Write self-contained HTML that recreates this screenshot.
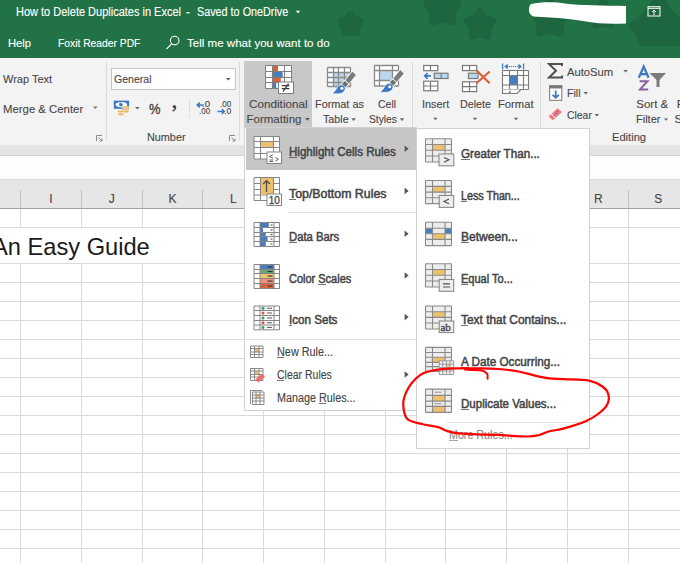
<!DOCTYPE html><html><head><meta charset="utf-8"><style>
*{margin:0;padding:0;box-sizing:border-box}
html,body{width:680px;height:563px;overflow:hidden;background:#fff;font-family:"Liberation Sans",sans-serif}
.a{position:absolute;white-space:nowrap;transform-origin:0 0;-webkit-text-stroke:0.12px currentColor}
svg{position:absolute;left:0;top:0}
</style></head><body><div class="a" style="left:0;top:0;width:680px;height:58px;background:#217346"></div>
<div class="a" style="left:0;top:58px;width:680px;height:87px;background:#f3f3f3"></div>
<div class="a" style="left:0;top:145px;width:680px;height:11px;background:#e4e4e4"></div>
<div class="a" style="left:0;top:155px;width:680px;height:1px;background:#d6d6d6"></div>
<div class="a" style="left:0;top:156px;width:680px;height:23px;background:#fdfdfd"></div>
<div class="a" style="left:0;top:178.5px;width:680px;height:1.5px;background:#d9d9d9"></div>
<div class="a" style="left:0;top:180px;width:680px;height:28px;background:#e6e6e6"></div>
<div class="a" style="left:0;top:207.5px;width:680px;height:1.5px;background:#a3a3a3"></div>
<svg width="680" height="563"><g stroke="#d9d9d9" stroke-width="1"><line x1="20.5" y1="209" x2="20.5" y2="563"/><line x1="20.5" y1="190" x2="20.5" y2="207.5" stroke="#c2c2c2"/><line x1="81.5" y1="209" x2="81.5" y2="563"/><line x1="81.5" y1="190" x2="81.5" y2="207.5" stroke="#c2c2c2"/><line x1="142.5" y1="209" x2="142.5" y2="563"/><line x1="142.5" y1="190" x2="142.5" y2="207.5" stroke="#c2c2c2"/><line x1="202.5" y1="209" x2="202.5" y2="563"/><line x1="202.5" y1="190" x2="202.5" y2="207.5" stroke="#c2c2c2"/><line x1="263.5" y1="209" x2="263.5" y2="563"/><line x1="263.5" y1="190" x2="263.5" y2="207.5" stroke="#c2c2c2"/><line x1="324.5" y1="209" x2="324.5" y2="563"/><line x1="324.5" y1="190" x2="324.5" y2="207.5" stroke="#c2c2c2"/><line x1="385.5" y1="209" x2="385.5" y2="563"/><line x1="385.5" y1="190" x2="385.5" y2="207.5" stroke="#c2c2c2"/><line x1="445.5" y1="209" x2="445.5" y2="563"/><line x1="445.5" y1="190" x2="445.5" y2="207.5" stroke="#c2c2c2"/><line x1="506.5" y1="209" x2="506.5" y2="563"/><line x1="506.5" y1="190" x2="506.5" y2="207.5" stroke="#c2c2c2"/><line x1="567.5" y1="209" x2="567.5" y2="563"/><line x1="567.5" y1="190" x2="567.5" y2="207.5" stroke="#c2c2c2"/><line x1="628.5" y1="209" x2="628.5" y2="563"/><line x1="628.5" y1="190" x2="628.5" y2="207.5" stroke="#c2c2c2"/><line x1="688.5" y1="209" x2="688.5" y2="563"/><line x1="688.5" y1="190" x2="688.5" y2="207.5" stroke="#c2c2c2"/><line x1="0" y1="227.5" x2="680" y2="227.5"/><line x1="0" y1="263.5" x2="680" y2="263.5"/><line x1="0" y1="282.5" x2="680" y2="282.5"/><line x1="0" y1="301.5" x2="680" y2="301.5"/><line x1="0" y1="320.5" x2="680" y2="320.5"/><line x1="0" y1="339.5" x2="680" y2="339.5"/><line x1="0" y1="358.5" x2="680" y2="358.5"/><line x1="0" y1="377.5" x2="680" y2="377.5"/><line x1="0" y1="396.5" x2="680" y2="396.5"/><line x1="0" y1="415.5" x2="680" y2="415.5"/><line x1="0" y1="434.5" x2="680" y2="434.5"/><line x1="0" y1="453.5" x2="680" y2="453.5"/><line x1="0" y1="472.5" x2="680" y2="472.5"/><line x1="0" y1="491.5" x2="680" y2="491.5"/><line x1="0" y1="510.5" x2="680" y2="510.5"/><line x1="0" y1="529.5" x2="680" y2="529.5"/><line x1="0" y1="548.5" x2="680" y2="548.5"/></g><polygon points="350.5,15.0 354.0,19.6 359.5,21.6 356.2,26.4 356.1,32.2 350.5,30.5 344.9,32.2 344.8,26.4 341.5,21.6 347.0,19.6" fill="#1e6640" stroke="#1e6640" stroke-width="8" stroke-linejoin="round"/><polygon points="442.5,-7.5 448.1,0.8 457.7,3.6 451.5,11.4 451.9,21.4 442.5,18.0 433.1,21.4 433.5,11.4 427.3,3.6 436.9,0.8" fill="#1e6640" stroke="#1e6640" stroke-width="8" stroke-linejoin="round"/><polygon points="480.0,12.0 484.7,18.5 492.4,21.0 487.6,27.5 487.6,35.5 480.0,33.0 472.4,35.5 472.4,27.5 467.6,21.0 475.3,18.5" fill="#1e6640" stroke="#1e6640" stroke-width="8" stroke-linejoin="round"/><polygon points="550.0,2.5 556.2,10.5 565.7,13.9 560.0,22.2 559.7,32.3 550.0,29.5 540.3,32.3 540.0,22.2 534.3,13.9 543.8,10.5" fill="#1e6640" stroke="#1e6640" stroke-width="8" stroke-linejoin="round"/><polygon points="603.0,3.0 607.4,8.9 614.4,11.3 610.1,17.3 610.1,24.7 603.0,22.5 595.9,24.7 595.9,17.3 591.6,11.3 598.6,8.9" fill="#1e6640" stroke="#1e6640" stroke-width="8" stroke-linejoin="round"/><path d="M653 0H666C670 8 674 14 680 16V46H639C638 40 637 37 634 33C626 29 627 22 638 18Z" fill="#1e6640"/><path d="M531 4C542 1.5 556 2 565 3.5C580 5.5 605 5.5 626 6V23.5C612 24 598 24 583 21C567 18 550 17.5 533 16.5C528 14 528 7 531 4Z" fill="#fff"/><path d="M106.5 62V141" stroke="#dadada" stroke-width="1"/><path d="M239.5 62V141" stroke="#dadada" stroke-width="1"/><path d="M412.5 62V141" stroke="#dadada" stroke-width="1"/><path d="M540.5 62V141" stroke="#dadada" stroke-width="1"/><path d="M96.5 141.0V135.5H102.0M98.5 137.5L102.0 141.0M102.0 138.5V141.0H99.5" stroke="#8a8a8a" stroke-width="1" fill="none"/><path d="M229.5 141.0V135.5H235.0M231.5 137.5L235.0 141.0M235.0 138.5V141.0H232.5" stroke="#8a8a8a" stroke-width="1" fill="none"/><rect x="111.5" y="68.5" width="124" height="21" fill="#fff" stroke="#c6c6c6"/><path d="M226.0 77.9H230.60000000000002L228.3 80.5Z" fill="#5a5a5a"/><path d="M93.0 106.5H97.6L95.3 109.1Z" fill="#777"/><rect x="113.8" y="100.6" width="15.3" height="8.2" fill="#3f78c2"/><ellipse cx="121.4" cy="104.7" rx="5.8" ry="2.7" fill="#fff"/><circle cx="121" cy="104.6" r="2" fill="#3f78c2"/><path d="M122.6 104.5a1.6 1.6 0 0 0 -1.6 -1.6" stroke="#fff" stroke-width="0.6" fill="none"/><ellipse cx="125.8" cy="107.4" rx="3.3" ry="1.3" fill="#e7b763" stroke="#f3f3f3" stroke-width="0.5"/><ellipse cx="125.8" cy="109.6" rx="3.3" ry="1.3" fill="#e7b763" stroke="#f3f3f3" stroke-width="0.5"/><ellipse cx="125.8" cy="111.6" rx="3.3" ry="1.3" fill="#e7b763" stroke="#f3f3f3" stroke-width="0.5"/><ellipse cx="120.7" cy="111.6" rx="3.3" ry="1.3" fill="#e7b763" stroke="#f3f3f3" stroke-width="0.5"/><ellipse cx="120.7" cy="114.2" rx="3.3" ry="1.3" fill="#e7b763" stroke="#f3f3f3" stroke-width="0.5"/><path d="M135.0 107.0H139.60000000000002L137.3 109.6Z" fill="#666"/><path d="M189.5 99V118.5" stroke="#c8c8c8" stroke-width="1" stroke-dasharray="1 1"/><path d="M203.5 105H197.5M199.8 102.6L197.3 105L199.8 107.4" stroke="#3f78c2" stroke-width="1.6" fill="none"/><path d="M224 111.5H217.5M221.8 109.1L224.3 111.5L221.8 113.9" stroke="#3f78c2" stroke-width="1.6" fill="none"/><rect x="244" y="61" width="68" height="66" fill="#c8c8c8"/><rect x="265.5" y="65.5" width="26.0" height="23.0" fill="#fff"/><rect x="272.5" y="66" width="5.5" height="5.5" fill="#d9603b"/><rect x="272.5" y="71.5" width="10.199999999999989" height="6.0" fill="#4a7ebb"/><rect x="272.5" y="77.5" width="8.300000000000011" height="5.0" fill="#d9603b"/><rect x="272.5" y="82.5" width="3.6999999999999886" height="6.0" fill="#4a7ebb"/><path d="M265.5 65.5V88.5M272.5 65.5V88.5M284.5 65.5V88.5M291.5 65.5V88.5M265.5 65.5H291.5M265.5 71.5H291.5M265.5 77.5H291.5M265.5 82.5H291.5M265.5 88.5H291.5" stroke="#7f7f7f" stroke-width="1" fill="none"/><rect x="278.5" y="82" width="15.0" height="11.5" fill="#fff" stroke="#7f7f7f" stroke-width="1"/><path d="M281.8 85.6H289.4M281.8 88.6H289.4M288.6 83.6L283 91.6" stroke="#3c3c3c" stroke-width="1.2" fill="none"/><path d="M305.0 117.95H309.79999999999995L307.4 120.85000000000001Z" fill="#555"/><rect x="327.5" y="67.5" width="23.0" height="19.0" fill="#fff"/><rect x="333.5" y="72.5" width="17.0" height="14.0" fill="#bcd6ee"/><path d="M327.5 67.5V86.5M333.5 67.5V86.5M338.5 67.5V86.5M344.5 67.5V86.5M350.5 67.5V86.5M327.5 67.5H350.5M327.5 72.5H350.5M327.5 77.5H350.5M327.5 82.5H350.5M327.5 86.5H350.5" stroke="#8a8a8a" stroke-width="1.3" fill="none"/><g transform="translate(0 0)"><path d="M352.4 71.6L356 74.9L348.9 83.4L345.4 80.2Z M344.8 80.9L348.3 84.1L345.3 87.4L341.8 84.3Z" fill="#fff" stroke="#fff" stroke-width="1.6" stroke-linejoin="round"/><path d="M352.4 71.6L356 74.9L348.9 83.4L345.4 80.2Z" fill="#7b7b7b"/><path d="M344.8 80.9L348.3 84.1L345.3 87.4L341.8 84.3Z" fill="#6e6e6e"/><path d="M341.6 84.8C338.8 84.8 336.8 87 336.2 89.4L332.4 93.8H338.8C342.3 93.6 345.2 91.3 345.2 88.3C345.2 86.4 343.6 84.8 341.6 84.8Z" fill="#3f78c2" stroke="#fff" stroke-width="0.6"/><circle cx="341.9" cy="88.3" r="1.5" fill="#fff"/></g><path d="M351.3 118.3H355.90000000000003L353.6 120.89999999999999Z" fill="#666"/><rect x="374.5" y="65.5" width="24.0" height="20.5" fill="#fff"/><rect x="379.5" y="70.5" width="13.0" height="10.0" fill="#bcd6ee"/><path d="M374.5 65.5V86M379.5 65.5V86M392.5 65.5V86M398.5 65.5V86M374.5 65.5H398.5M374.5 70.5H398.5M374.5 80.5H398.5M374.5 86H398.5" stroke="#8a8a8a" stroke-width="1.3" fill="none"/><g transform="translate(47.8 -1.5)"><path d="M352.4 71.6L356 74.9L348.9 83.4L345.4 80.2Z M344.8 80.9L348.3 84.1L345.3 87.4L341.8 84.3Z" fill="#fff" stroke="#fff" stroke-width="1.6" stroke-linejoin="round"/><path d="M352.4 71.6L356 74.9L348.9 83.4L345.4 80.2Z" fill="#7b7b7b"/><path d="M344.8 80.9L348.3 84.1L345.3 87.4L341.8 84.3Z" fill="#6e6e6e"/><path d="M341.6 84.8C338.8 84.8 336.8 87 336.2 89.4L332.4 93.8H338.8C342.3 93.6 345.2 91.3 345.2 88.3C345.2 86.4 343.6 84.8 341.6 84.8Z" fill="#3f78c2" stroke="#fff" stroke-width="0.6"/><circle cx="341.9" cy="88.3" r="1.5" fill="#fff"/></g><path d="M399.7 118.3H404.3L402 120.89999999999999Z" fill="#666"/><rect x="423.7" y="65.5" width="14.100000000000023" height="5.200000000000003" fill="#fff" stroke="#7a7a7a" stroke-width="1.2"/><path d="M430.5 65.5V70.7" stroke="#7a7a7a" stroke-width="1.2"/><rect x="434.2" y="73.2" width="13.800000000000011" height="5.299999999999997" fill="#bcd6ee" stroke="#7a7a7a" stroke-width="1.2"/><path d="M441.2 73.2V78.5" stroke="#7a7a7a" stroke-width="1.2"/><path d="M431 75.9H425.5M427.6 73.2L424.8 75.9L427.6 78.6" stroke="#3f78c2" stroke-width="1.8" fill="none"/><rect x="423.7" y="81.2" width="14.100000000000023" height="9.599999999999994" fill="#fff" stroke="#7a7a7a" stroke-width="1.2"/><path d="M430.5 81.2V90.8M423.7 86H437.8" stroke="#7a7a7a" stroke-width="1.2"/><path d="M433.2 117.8H437.59999999999997L435.4 120.2Z" fill="#666"/><rect x="462.5" y="65.5" width="14.199999999999989" height="5.099999999999994" fill="#fff" stroke="#7a7a7a" stroke-width="1.2"/><path d="M469.5 65.5V70.6" stroke="#7a7a7a" stroke-width="1.2"/><rect x="468.5" y="73.2" width="9.5" height="5.299999999999997" fill="#bcd6ee" stroke="#7a7a7a" stroke-width="1.2"/><rect x="462.5" y="81.8" width="14.199999999999989" height="9.799999999999997" fill="#fff" stroke="#7a7a7a" stroke-width="1.2"/><path d="M469.5 81.8V91.6M462.5 86.6H476.7" stroke="#7a7a7a" stroke-width="1.2"/><path d="M476.7 70.6L489.7 83.3M489.7 71.5L476.7 83" stroke="#d9603b" stroke-width="2.2"/><path d="M472.8 117.8H477.2L475 120.2Z" fill="#666"/><path d="M502.6 63.6V69.4M523.6 63.6V69.4" stroke="#3f78c2" stroke-width="1.2" fill="none"/><path d="M507 66.5H519" stroke="#3f78c2" stroke-width="1" stroke-dasharray="1.2 0.8" fill="none"/><path d="M507.8 63.8L504.2 66.5L507.8 69.2ZM518.4 63.8L522 66.5L518.4 69.2Z" fill="#3f78c2"/><rect x="502.5" y="70.5" width="26.0" height="19.0" fill="#fff"/><rect x="509.5" y="75.5" width="8.0" height="9.5" fill="#4a7ebb"/><path d="M502.5 70.5V89.5M509.5 70.5V89.5M517.5 70.5V89.5M523.5 70.5V89.5M528.5 70.5V89.5M502.5 70.5H528.5M502.5 75.5H528.5M502.5 85H528.5M502.5 89.5H528.5" stroke="#7a7a7a" stroke-width="1.1" fill="none"/><path d="M502.5 89.5V93.5H508.5L510 91.5V93.5H517L521 89.5" stroke="#7a7a7a" stroke-width="1.1" fill="#fff"/><path d="M513.8 117.8H518.2L516 120.2Z" fill="#666"/><path d="M562 66V64H549L556 70.8L549 77.5H562V75.5" stroke="#505050" stroke-width="2" fill="none" stroke-linejoin="miter"/><path d="M623.4 70.0H627.8000000000001L625.6 72.4Z" fill="#666"/><rect x="549.6" y="85.8" width="12.199999999999932" height="14.5" fill="#fff" stroke="#7a7a7a" stroke-width="1"/><rect x="549.1" y="85.3" width="13.199999999999932" height="3.200000000000003" fill="#7a7a7a"/><path d="M555.7 90.5V97.5M552.6 94.8L555.7 97.8L558.8 94.8" stroke="#3f78c2" stroke-width="1.8" fill="none"/><path d="M583.5999999999999 92.1H588.0L585.8 94.5Z" fill="#666"/><path d="M557.6 108.2L561.9 112L552.8 120.3L548.5 116.5Z" fill="#f27a78"/><path d="M551.2 113.9L555.4 117.7" stroke="#fbe0e0" stroke-width="1.1"/><circle cx="557.5" cy="111.6" r="0.7" fill="#5b5bb5"/><circle cx="556.4" cy="113.5" r="0.7" fill="#5b5bb5"/><circle cx="554.4" cy="115.5" r="0.7" fill="#5b5bb5"/><path d="M594.5999999999999 114.1H599.0L596.8 116.5Z" fill="#666"/><path d="M638.8 77.8L643.7 66.6L648.6 77.8M640.4 74.2H647" stroke="#3f78c2" stroke-width="2.2" fill="none"/><path d="M639.6 81.2H647.5L640 89.4H648.2" stroke="#8e5ea3" stroke-width="2" fill="none"/><path d="M649.5 73H666L659.5 80V87H656.5V80Z" fill="#7a7a7a"/><path d="M663.8 118.39999999999999H668.2L666 120.8Z" fill="#666"/><rect x="648" y="6.7" width="12" height="9.3" fill="none" stroke="#fff" stroke-width="1"/><path d="M648 8.3H660M654 10V15M652 12L654 10L656 12" stroke="#fff" stroke-width="1" fill="none"/><circle cx="174.7" cy="40.6" r="4.3" fill="none" stroke="#fff" stroke-width="1.1"/><path d="M171.6 43.9L166.4 49.1" stroke="#fff" stroke-width="1.2"/><path d="M295.7 10.7H300.3L298 13.3Z" fill="#fff"/></svg>
<div class="a" style="left:16.00px;top:5.84px;font-size:12px;line-height:12px;color:#ffffff;transform:scaleX(0.9162);">How to Delete Duplicates in Excel</div>
<div class="a" style="left:186.00px;top:5.84px;font-size:12px;line-height:12px;color:#ffffff;">-</div>
<div class="a" style="left:196.75px;top:5.84px;font-size:12px;line-height:12px;color:#ffffff;transform:scaleX(0.8999);">Saved to OneDrive</div>
<div class="a" style="left:8.10px;top:38.31px;font-size:11.8px;line-height:11.8px;color:#ffffff;transform:scaleX(0.9506);">Help</div>
<div class="a" style="left:57.60px;top:38.31px;font-size:11.8px;line-height:11.8px;color:#ffffff;transform:scaleX(0.8729);">Foxit Reader PDF</div>
<div class="a" style="left:187.40px;top:38.11px;font-size:11.8px;line-height:11.8px;color:#ffffff;transform:scaleX(0.9794);">Tell me what you want to do</div>
<div class="a" style="left:3.20px;top:74.47px;font-size:11.5px;line-height:11.5px;color:#474747;transform:scaleX(0.9572);">Wrap Text</div>
<div class="a" style="left:3.20px;top:103.67px;font-size:11.5px;line-height:11.5px;color:#474747;transform:scaleX(0.9877);">Merge &amp; Center</div>
<div class="a" style="left:114.30px;top:74.37px;font-size:11.5px;line-height:11.5px;color:#474747;transform:scaleX(0.9169);">General</div>
<div class="a" style="left:146.50px;top:132.29px;font-size:11px;line-height:11px;color:#474747;transform:scaleX(0.9847);">Number</div>
<div class="a" style="left:249.20px;top:98.67px;font-size:11.5px;line-height:11.5px;color:#474747;transform:scaleX(1.0191);">Conditional</div>
<div class="a" style="left:246.50px;top:114.37px;font-size:11.5px;line-height:11.5px;color:#474747;">Formatting</div>
<div class="a" style="left:314.80px;top:98.67px;font-size:11.5px;line-height:11.5px;color:#474747;transform:scaleX(0.9440);">Format as</div>
<div class="a" style="left:322.80px;top:114.37px;font-size:11.5px;line-height:11.5px;color:#474747;transform:scaleX(0.9345);">Table</div>
<div class="a" style="left:377.50px;top:98.67px;font-size:11.5px;line-height:11.5px;color:#474747;transform:scaleX(0.9141);">Cell</div>
<div class="a" style="left:368.60px;top:114.37px;font-size:11.5px;line-height:11.5px;color:#474747;transform:scaleX(0.8914);">Styles</div>
<div class="a" style="left:421.50px;top:98.87px;font-size:11.5px;line-height:11.5px;color:#474747;transform:scaleX(0.9444);">Insert</div>
<div class="a" style="left:460.00px;top:98.87px;font-size:11.5px;line-height:11.5px;color:#474747;transform:scaleX(0.9337);">Delete</div>
<div class="a" style="left:498.00px;top:98.87px;font-size:11.5px;line-height:11.5px;color:#474747;transform:scaleX(0.9753);">Format</div>
<div class="a" style="left:566.60px;top:66.57px;font-size:11.5px;line-height:11.5px;color:#474747;transform:scaleX(0.9767);">AutoSum</div>
<div class="a" style="left:566.60px;top:88.27px;font-size:11.5px;line-height:11.5px;color:#474747;transform:scaleX(0.9252);">Fill</div>
<div class="a" style="left:566.60px;top:110.07px;font-size:11.5px;line-height:11.5px;color:#474747;transform:scaleX(0.9055);">Clear</div>
<div class="a" style="left:636.30px;top:98.97px;font-size:11.5px;line-height:11.5px;color:#474747;">Sort &amp;</div>
<div class="a" style="left:636.30px;top:114.37px;font-size:11.5px;line-height:11.5px;color:#474747;transform:scaleX(0.9570);">Filter</div>
<div class="a" style="left:676.80px;top:98.97px;font-size:11.5px;line-height:11.5px;color:#474747;">F</div>
<div class="a" style="left:674.50px;top:114.37px;font-size:11.5px;line-height:11.5px;color:#474747;">S</div>
<div class="a" style="left:612.20px;top:132.32px;font-size:11.2px;line-height:11.2px;color:#474747;transform:scaleX(0.9942);">Editing</div>
<div class="a" style="left:49.25px;top:192.64px;font-size:12px;line-height:12px;color:#474747;">I</div>
<div class="a" style="left:108.70px;top:192.64px;font-size:12px;line-height:12px;color:#474747;">J</div>
<div class="a" style="left:168.50px;top:192.64px;font-size:12px;line-height:12px;color:#474747;">K</div>
<div class="a" style="left:229.95px;top:192.64px;font-size:12px;line-height:12px;color:#474747;">L</div>
<div class="a" style="left:593.95px;top:192.64px;font-size:12px;line-height:12px;color:#474747;">R</div>
<div class="a" style="left:654.30px;top:192.64px;font-size:12px;line-height:12px;color:#474747;">S</div>
<div class="a" style="left:0;top:228px;width:202px;height:35px;background:#fff"></div>
<div class="a" style="left:-8.00px;top:234.58px;font-size:24.6px;line-height:24.6px;color:#1a1a1a;-webkit-text-stroke:0;transform:scaleX(0.9616)">An Easy Guide</div>
<div class="a" style="left:148.50px;top:101.95px;font-size:14px;line-height:14px;color:#474747;transform:scaleX(0.9194);-webkit-text-stroke:0.35px #444;">%</div>
<svg width="680" height="563"><circle cx="174.3" cy="106.6" r="1.6" fill="#444"/><path d="M175.7 106.8C175.7 108.8 174.5 110.3 172.6 111.2" fill="none" stroke="#444" stroke-width="1.3"/></svg>
<div class="a" style="left:201.80px;top:99.60px;font-size:8.5px;line-height:8.5px;color:#474747;transform:scaleX(1.1408);">.0</div>
<div class="a" style="left:198.80px;top:106.60px;font-size:8.5px;line-height:8.5px;color:#474747;transform:scaleX(0.9407);">.00</div>
<div class="a" style="left:220.00px;top:99.80px;font-size:8.5px;line-height:8.5px;color:#474747;transform:scaleX(0.9492);">.00</div>
<div class="a" style="left:224.00px;top:106.60px;font-size:8.5px;line-height:8.5px;color:#474747;transform:scaleX(1.0141);">.0</div>
<div class="a" style="left:244px;top:127px;width:173px;height:284px;background:#fff;border:1px solid #d2d2d2"></div>
<div class="a" style="left:246px;top:128px;width:170px;height:42px;background:#c6c6c6"></div>
<div class="a" style="left:288px;top:212px;width:128px;height:1px;background:#e1e1e1"></div>
<div class="a" style="left:246px;top:339px;width:170px;height:1px;background:#e1e1e1"></div>
<div class="a" style="left:416px;top:128px;width:174px;height:321px;background:#fff;border:1px solid #d2d2d2"></div>
<div class="a" style="left:447px;top:422px;width:142px;height:1px;background:#e1e1e1"></div>
<svg width="680" height="563"><rect x="254" y="136.5" width="25.5" height="22.5" fill="#fff"/><rect x="260.5" y="141.5" width="13.0" height="6.0" fill="#ecc06c"/><path d="M254 136.5V159M260.5 136.5V159M273.5 136.5V159M279.5 136.5V159M254 136.5H279.5M254 141.5H279.5M254 147.5H279.5M254 153.5H279.5M254 159H279.5" stroke="#858585" stroke-width="1" fill="none"/><rect x="267" y="152" width="14.5" height="11.5" fill="#fff" stroke="#858585" stroke-width="1"/><path d="M273 154.8L269.5 156.5L273 158.2M269.5 160H273M269.5 161.5H273M275.5 157.5L278.5 159.2L275.5 161" stroke="#505050" stroke-width="0.9" fill="none"/><rect x="254" y="177.5" width="25.5" height="23.0" fill="#fff"/><path d="M254 177.5V200.5M260.5 177.5V200.5M273.5 177.5V200.5M279.5 177.5V200.5M254 177.5H279.5M254 183.5H279.5M254 189.5H279.5M254 195H279.5M254 200.5H279.5" stroke="#858585" stroke-width="1" fill="none"/><rect x="261" y="178" width="12" height="17" fill="#ecc06c"/><path d="M266.5 192V180.8M263.2 184L266.5 180.6L269.8 184" stroke="#505050" stroke-width="1.3" fill="none"/><rect x="267" y="194" width="14.5" height="11.5" fill="#fff" stroke="#858585" stroke-width="1"/><text x="268.8" y="203.8" font-size="10" fill="#444" stroke="#444" stroke-width="0.3" font-family="Liberation Sans">10</text><rect x="254" y="222.5" width="25.5" height="24.0" fill="#fff"/><rect x="260" y="223.0" width="8.800000000000011" height="4.0" fill="#4a7ebb"/><rect x="270.5" y="224.5" width="2.0" height="1.0" fill="#444"/><rect x="260" y="228.0" width="3" height="4.0" fill="#4a7ebb"/><rect x="270.5" y="229.5" width="2.0" height="1.0" fill="#444"/><rect x="260" y="233.0" width="5.800000000000011" height="3.0" fill="#4a7ebb"/><rect x="270.5" y="234.0" width="2.0" height="1.0" fill="#444"/><rect x="260" y="237.0" width="7.600000000000023" height="4.0" fill="#4a7ebb"/><rect x="270.5" y="238.5" width="2.0" height="1.0" fill="#444"/><rect x="260" y="242.0" width="5.800000000000011" height="4.0" fill="#4a7ebb"/><rect x="270.5" y="243.5" width="2.0" height="1.0" fill="#444"/><path d="M254 222.5V246.5M260 222.5V246.5M274 222.5V246.5M279.5 222.5V246.5M254 222.5H279.5M254 227.5H279.5M254 232.5H279.5M254 236.5H279.5M254 241.5H279.5M254 246.5H279.5" stroke="#858585" stroke-width="1" fill="none"/><rect x="254" y="264.5" width="25.5" height="24.0" fill="#fff"/><rect x="260" y="264.5" width="14" height="5.0" fill="#4a7ebb"/><rect x="267.5" y="266.5" width="5.0" height="1.1000000000000227" fill="#333"/><rect x="260" y="269.5" width="14" height="4.0" fill="#63a874"/><rect x="267.5" y="271.0" width="5.0" height="1.1000000000000227" fill="#333"/><rect x="260" y="273.5" width="14" height="5.0" fill="#f2c46b"/><rect x="267.5" y="275.5" width="5.0" height="1.1000000000000227" fill="#333"/><rect x="260" y="278.5" width="14" height="5.0" fill="#f58c7a"/><rect x="267.5" y="280.5" width="5.0" height="1.1000000000000227" fill="#333"/><rect x="260" y="283.5" width="14" height="5.0" fill="#e0603e"/><rect x="267.5" y="285.5" width="5.0" height="1.1000000000000227" fill="#333"/><path d="M254 264.5V288.5M260 264.5V288.5M274 264.5V288.5M279.5 264.5V288.5M254 264.5H279.5M254 269.5H279.5M254 273.5H279.5M254 278.5H279.5M254 283.5H279.5M254 288.5H279.5" stroke="#858585" stroke-width="1" fill="none"/><rect x="254" y="306" width="25.5" height="23.80000000000001" fill="#fff"/><path d="M254 306V329.8M260 306V329.8M274 306V329.8M279.5 306V329.8M254 306H279.5M254 310.5H279.5M254 315.5H279.5M254 320.5H279.5M254 325H279.5M254 329.8H279.5" stroke="#858585" stroke-width="1" fill="none"/><circle cx="263" cy="308.25" r="1.5" fill="#3d9a5b"/><rect x="267" y="307.75" width="5" height="1.0" fill="#555"/><circle cx="263" cy="313.0" r="1.5" fill="#e8503a"/><rect x="267" y="312.5" width="5" height="1.0" fill="#555"/><circle cx="263" cy="318.0" r="1.5" fill="#3d9a5b"/><rect x="267" y="317.5" width="5" height="1.0" fill="#555"/><circle cx="263" cy="322.75" r="1.5" fill="#e8503a"/><rect x="267" y="322.25" width="5" height="1.0" fill="#555"/><circle cx="263" cy="327.4" r="1.5" fill="#3d9a5b"/><rect x="267" y="326.9" width="5" height="1.0" fill="#555"/><rect x="250.5" y="346" width="12.5" height="11.5" fill="#fff"/><rect x="254.5" y="348.5" width="4.5" height="3.5" fill="#ecc06c"/><path d="M250.5 346V357.5M254.5 346V357.5M259 346V357.5M263 346V357.5M250.5 346H263M250.5 348.5H263M250.5 352H263M250.5 354.5H263M250.5 357.5H263" stroke="#8a8a8a" stroke-width="1" fill="none"/><rect x="250.5" y="368.5" width="12.5" height="12.0" fill="#fff"/><rect x="254.5" y="371" width="4.5" height="3.5" fill="#ecc06c"/><path d="M250.5 368.5V380.5M254.5 368.5V380.5M259 368.5V380.5M263 368.5V380.5M250.5 368.5H263M250.5 371H263M250.5 374.5H263M250.5 377H263M250.5 380.5H263" stroke="#8a8a8a" stroke-width="1" fill="none"/><path d="M255.5 379.5L262 373.5L265 376.5L258.5 382.5Z" fill="#ef6f6c"/><path d="M250.5 404V390.5H262" stroke="#8a8a8a" stroke-width="1" fill="none"/><rect x="252.5" y="392" width="11.5" height="12.5" fill="#fff"/><rect x="256" y="394" width="4" height="4" fill="#ecc06c"/><path d="M252.5 392V404.5M256 392V404.5M260 392V404.5M264 392V404.5M252.5 392H264M252.5 395H264M252.5 398H264M252.5 401H264M252.5 404.5H264" stroke="#8a8a8a" stroke-width="1" fill="none"/><rect x="425.5" y="138.8" width="26.0" height="23.19999999999999" fill="#ededed"/><rect x="432.5" y="144.5" width="12.5" height="5.699999999999989" fill="#ecc06c"/><path d="M425.5 138.8V162M432.5 138.8V162M445 138.8V162M451.5 138.8V162M425.5 138.8H451.5M425.5 144.5H451.5M425.5 150.2H451.5M425.5 156H451.5M425.5 162H451.5" stroke="#8a8a8a" stroke-width="1.1" fill="none"/><rect x="439" y="154" width="14.800000000000011" height="11.800000000000011" fill="#ededed" stroke="#8a8a8a" stroke-width="1.1"/><path d="M444 157.5L449 159.8L444 162.2" stroke="#505050" stroke-width="1.1" fill="none"/><rect x="425.5" y="180.5" width="26.0" height="23.099999999999994" fill="#ededed"/><rect x="432.5" y="186.4" width="12.5" height="5.699999999999989" fill="#ecc06c"/><path d="M425.5 180.5V203.6M432.5 180.5V203.6M445 180.5V203.6M451.5 180.5V203.6M425.5 180.5H451.5M425.5 186.4H451.5M425.5 192.1H451.5M425.5 197.7H451.5M425.5 203.6H451.5" stroke="#8a8a8a" stroke-width="1.1" fill="none"/><rect x="439.2" y="195.5" width="14.5" height="11.900000000000006" fill="#ededed" stroke="#8a8a8a" stroke-width="1.1"/><path d="M449 199L444 201.4L449 203.8" stroke="#505050" stroke-width="1.1" fill="none"/><rect x="425.5" y="222.2" width="26.0" height="23.400000000000006" fill="#ededed"/><rect x="432.5" y="233.7" width="12.5" height="5.700000000000017" fill="#ecc06c"/><rect x="425.5" y="228.2" width="7.0" height="5.5" fill="#4a7ebb"/><rect x="445" y="228.2" width="6.5" height="5.5" fill="#4a7ebb"/><path d="M425.5 222.2V245.6M432.5 222.2V245.6M445 222.2V245.6M451.5 222.2V245.6M425.5 222.2H451.5M425.5 228.2H451.5M425.5 233.7H451.5M425.5 239.4H451.5M425.5 245.6H451.5" stroke="#8a8a8a" stroke-width="1.1" fill="none"/><rect x="425.5" y="263.8" width="26.0" height="23.19999999999999" fill="#ededed"/><rect x="432.5" y="269.5" width="12.5" height="5.699999999999989" fill="#ecc06c"/><path d="M425.5 263.8V287M432.5 263.8V287M445 263.8V287M451.5 263.8V287M425.5 263.8H451.5M425.5 269.5H451.5M425.5 275.2H451.5M425.5 281H451.5M425.5 287H451.5" stroke="#8a8a8a" stroke-width="1.1" fill="none"/><rect x="439.2" y="279.5" width="14.5" height="11.800000000000011" fill="#ededed" stroke="#8a8a8a" stroke-width="1.1"/><path d="M443 283.8H450M443 287H450" stroke="#505050" stroke-width="1.2" fill="none"/><rect x="425.5" y="306" width="26.0" height="23" fill="#ededed"/><rect x="432.5" y="311.8" width="12.5" height="5.599999999999966" fill="#ecc06c"/><path d="M425.5 306V329M432.5 306V329M445 306V329M451.5 306V329M425.5 306H451.5M425.5 311.8H451.5M425.5 317.4H451.5M425.5 323H451.5M425.5 329H451.5" stroke="#8a8a8a" stroke-width="1.1" fill="none"/><rect x="439.2" y="321" width="14.5" height="11.600000000000023" fill="#ededed" stroke="#8a8a8a" stroke-width="1.1"/><text x="440.4" y="331.2" font-size="11" fill="#444" stroke="#444" stroke-width="0.35" font-family="Liberation Serif">ab</text><rect x="425.5" y="347.4" width="26.0" height="24.0" fill="#ededed"/><rect x="431.5" y="357.3" width="14.0" height="5.099999999999966" fill="#ecc06c"/><path d="M425.5 347.4V371.4M432.5 347.4V371.4M445 347.4V371.4M451.5 347.4V371.4M425.5 347.4H451.5M425.5 352.5H451.5M425.5 357.3H451.5M425.5 362.4H451.5M425.5 366.6H451.5M425.5 371.4H451.5" stroke="#8a8a8a" stroke-width="1.1" fill="none"/><rect x="439.2" y="360.8" width="14.5" height="13.800000000000011" fill="#f4f4f4"/><rect x="446.4" y="364.2" width="3.6000000000000227" height="3.400000000000034" fill="#f0c080"/><path d="M439.2 360.8V374.6M442.8 360.8V374.6M446.4 360.8V374.6M450 360.8V374.6M453.7 360.8V374.6M439.2 360.8H453.7M439.2 364.2H453.7M439.2 367.6H453.7M439.2 371H453.7M439.2 374.6H453.7" stroke="#9a9a9a" stroke-width="1" fill="none"/><rect x="425.5" y="389.1" width="26.0" height="23.299999999999955" fill="#ededed"/><rect x="432.5" y="395.4" width="12.5" height="5.7000000000000455" fill="#ecc06c"/><rect x="432.5" y="406.4" width="12.5" height="6.0" fill="#ecc06c"/><path d="M425.5 389.1V412.4M432.5 389.1V412.4M445 389.1V412.4M451.5 389.1V412.4M425.5 389.1H451.5M425.5 395.4H451.5M425.5 401.1H451.5M425.5 406.4H451.5M425.5 412.4H451.5" stroke="#8a8a8a" stroke-width="1.1" fill="none"/><path d="M434.5 392.2H441.5M434.5 403.7H441.5" stroke="#909090" stroke-width="1"/><path d="M404.6 145.39999999999998L408.6 148.7L404.6 152.0Z" fill="#555"/><path d="M404.6 187.6L408.6 190.9L404.6 194.20000000000002Z" fill="#555"/><path d="M404.6 230.5L408.6 233.8L404.6 237.10000000000002Z" fill="#555"/><path d="M404.6 272.2L408.6 275.5L404.6 278.8Z" fill="#555"/><path d="M404.6 313.8L408.6 317.1L404.6 320.40000000000003Z" fill="#555"/><path d="M404.6 371.2L408.6 374.5L404.6 377.8Z" fill="#555"/></svg>
<div class="a" style="left:288.60px;top:146.24px;font-size:12px;line-height:12px;color:#444444;-webkit-text-stroke:0.5px currentColor;transform:scaleX(0.9639);">Highlight Cells Rules</div><div class="a" style="left:288.60px;top:157.20px;width:8.35px;height:1px;background:#444444;opacity:0.75"></div>
<div class="a" style="left:288.60px;top:188.14px;font-size:12px;line-height:12px;color:#444444;-webkit-text-stroke:0.5px currentColor;transform:scaleX(1.0285);">Top/Bottom Rules</div><div class="a" style="left:288.60px;top:199.10px;width:7.54px;height:1px;background:#444444;opacity:0.75"></div>
<div class="a" style="left:289.00px;top:231.14px;font-size:12px;line-height:12px;color:#444444;-webkit-text-stroke:0.5px currentColor;transform:scaleX(0.9419);">Data Bars</div><div class="a" style="left:289.00px;top:242.10px;width:8.16px;height:1px;background:#444444;opacity:0.75"></div>
<div class="a" style="left:289.00px;top:272.84px;font-size:12px;line-height:12px;color:#444444;-webkit-text-stroke:0.5px currentColor;transform:scaleX(0.9147);">Color Scales</div><div class="a" style="left:318.28px;top:283.80px;width:7.32px;height:1px;background:#444444;opacity:0.75"></div>
<div class="a" style="left:289.00px;top:314.44px;font-size:12px;line-height:12px;color:#444444;-webkit-text-stroke:0.5px currentColor;transform:scaleX(0.9680);">Icon Sets</div><div class="a" style="left:289.00px;top:325.40px;width:3.23px;height:1px;background:#444444;opacity:0.75"></div>
<div class="a" style="left:276.50px;top:345.84px;font-size:12px;line-height:12px;color:#444444;transform:scaleX(0.9048);">New Rule...</div><div class="a" style="left:276.50px;top:356.80px;width:7.84px;height:1px;background:#444444;opacity:0.75"></div>
<div class="a" style="left:276.50px;top:368.84px;font-size:12px;line-height:12px;color:#444444;transform:scaleX(0.8740);">Clear Rules</div><div class="a" style="left:276.50px;top:379.80px;width:7.57px;height:1px;background:#444444;opacity:0.75"></div>
<div class="a" style="left:276.50px;top:391.84px;font-size:12px;line-height:12px;color:#444444;transform:scaleX(0.8993);">Manage Rules...</div><div class="a" style="left:318.50px;top:402.80px;width:7.79px;height:1px;background:#444444;opacity:0.75"></div>
<div class="a" style="left:461.10px;top:147.84px;font-size:12px;line-height:12px;color:#444444;-webkit-text-stroke:0.5px currentColor;transform:scaleX(0.9717);">Greater Than...</div><div class="a" style="left:461.10px;top:158.80px;width:9.07px;height:1px;background:#444444;opacity:0.75"></div>
<div class="a" style="left:461.10px;top:189.64px;font-size:12px;line-height:12px;color:#444444;-webkit-text-stroke:0.5px currentColor;transform:scaleX(0.8921);">Less Than...</div><div class="a" style="left:461.10px;top:200.60px;width:5.95px;height:1px;background:#444444;opacity:0.75"></div>
<div class="a" style="left:461.10px;top:231.24px;font-size:12px;line-height:12px;color:#444444;-webkit-text-stroke:0.5px currentColor;transform:scaleX(1.0035);">Between...</div><div class="a" style="left:461.10px;top:242.20px;width:8.03px;height:1px;background:#444444;opacity:0.75"></div>
<div class="a" style="left:461.10px;top:272.64px;font-size:12px;line-height:12px;color:#444444;-webkit-text-stroke:0.5px currentColor;transform:scaleX(0.9186);">Equal To...</div><div class="a" style="left:461.10px;top:283.60px;width:7.35px;height:1px;background:#444444;opacity:0.75"></div>
<div class="a" style="left:461.10px;top:314.14px;font-size:12px;line-height:12px;color:#444444;-webkit-text-stroke:0.5px currentColor;transform:scaleX(0.9925);">Text that Contains...</div><div class="a" style="left:461.10px;top:325.10px;width:7.27px;height:1px;background:#444444;opacity:0.75"></div>
<div class="a" style="left:461.10px;top:356.14px;font-size:12px;line-height:12px;color:#444444;-webkit-text-stroke:0.5px currentColor;transform:scaleX(0.9773);">A Date Occurring...</div><div class="a" style="left:461.10px;top:367.10px;width:7.82px;height:1px;background:#444444;opacity:0.75"></div>
<div class="a" style="left:461.10px;top:397.64px;font-size:12px;line-height:12px;color:#444444;-webkit-text-stroke:0.5px currentColor;transform:scaleX(0.9597);">Duplicate Values...</div><div class="a" style="left:461.10px;top:408.60px;width:8.32px;height:1px;background:#444444;opacity:0.75"></div>
<div class="a" style="left:449.00px;top:428.64px;font-size:12px;line-height:12px;color:#8a8a8a;transform:scaleX(0.8922);">More Rules...</div><div class="a" style="left:449.00px;top:439.60px;width:8.92px;height:1px;background:#8a8a8a;opacity:0.75"></div>
<svg width="680" height="563"><path d="M477.4 368.4C484.3 368.5 491.1 368.5 498.0 369.0C504.9 369.5 512.3 370.4 518.5 371.5C524.7 372.6 529.9 374.5 535.0 375.6C540.1 376.8 544.6 377.8 549.4 378.4C554.2 379.0 557.4 378.7 564.0 379.1C570.6 379.5 582.6 379.4 589.0 380.6C595.4 381.8 599.2 384.3 602.4 386.5C605.6 388.7 607.4 390.9 608.2 393.8C609.1 396.7 609.0 400.8 607.5 404.0C606.0 407.2 602.9 410.2 599.4 413.0C595.9 415.8 592.1 418.4 586.2 421.0C580.3 423.6 570.1 426.7 564.0 428.4C557.9 430.1 553.6 430.2 549.4 431.3C545.2 432.4 542.7 434.1 539.0 435.0C535.3 435.9 534.2 436.5 527.4 436.5C520.6 436.5 506.3 435.3 498.0 434.9C489.7 434.5 484.3 434.6 477.4 434.3C470.5 434.0 461.9 433.8 456.8 433.2C451.7 432.6 449.6 431.8 446.5 430.8C443.4 429.8 442.3 428.2 438.2 427.1C434.1 426.0 426.8 425.2 421.8 424.0C416.8 422.8 411.3 421.8 408.4 419.9C405.5 418.0 405.1 415.9 404.3 412.6C403.5 409.3 402.9 404.4 403.6 400.3C404.3 396.2 406.4 391.6 408.4 388.0C410.4 384.4 413.0 381.2 415.6 378.7C418.2 376.2 420.4 374.6 423.8 373.1C427.2 371.6 430.7 370.6 436.2 369.8C441.7 369.0 449.9 368.6 456.8 368.4C463.7 368.2 470.5 368.3 477.4 368.4" stroke="#f00" stroke-width="2.2" fill="none" stroke-linecap="round"/><path d="M465.0 369.6C467.8 369.7 477.8 369.8 481.5 370.4C485.2 371.0 486.0 372.1 487.0 373.5C488.0 374.9 487.5 377.8 487.6 378.7" stroke="#f00" stroke-width="2" fill="none" stroke-linecap="round"/></svg></body></html>
